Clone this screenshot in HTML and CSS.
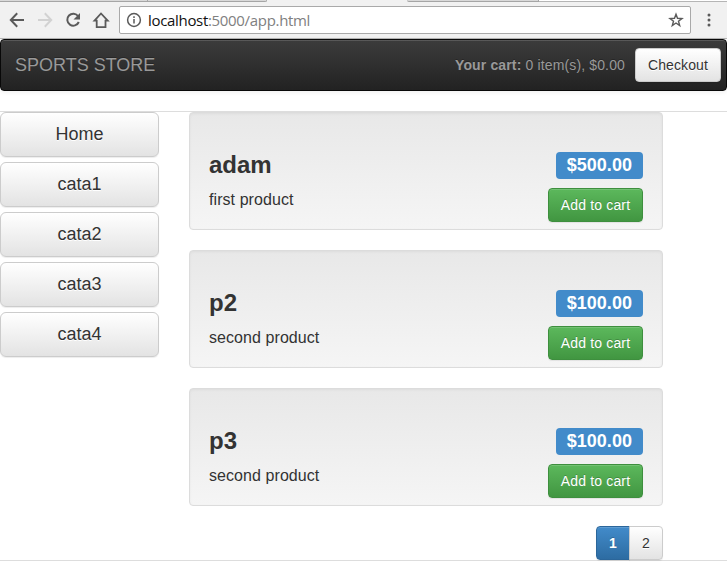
FILE: index.html
```html
<!DOCTYPE html>
<html lang="en">
<head>
<meta charset="utf-8">
<title>SportsStore</title>
<link rel="stylesheet" href="styles.css">
</head>
<body>
<header class="browser">
  <div class="tabs"><span class="tab tab-first"></span><span class="tab tab-second"></span><span class="tab-active"></span><span class="tab tab-third"></span><span class="tab-rest"></span></div>
  <div class="toolbar">
    <svg class="nav-icons" width="119" height="36" viewBox="0 2 119 36" fill="none" stroke="#5a5a5a" stroke-width="2">
      <path d="M24 20H11M17.2 13.3L10.8 20l6.4 6.7"/>
      <path stroke="#d2d2d2" d="M38 20h13M44.8 13.3l6.4 6.7-6.4 6.7"/>
      <path d="M78.2 16.2A6 6 0 1 0 78.8 22"/>
      <path fill="#5a5a5a" stroke="none" d="M80 13v6.5h-6.5z"/>
      <path stroke-width="1.8" stroke-linejoin="miter" d="M96.7 20.6h-2.2L101 13.5l6.7 7.1h-2.2v6.5h-8.8z"/>
    </svg>
    <div class="address">
      <svg width="16" height="16" viewBox="0 0 16 16" fill="none" stroke="#5a5a5a" stroke-width="1.5"><circle cx="8" cy="8" r="6.4"/><path d="M8 7v4.5M8 4.3v1.6"/></svg>
      <span class="url"><b>localhost</b>:5000/app.html</span>
      <svg class="star" width="16" height="16" viewBox="0 0 16 16" fill="none" stroke="#5a5a5a" stroke-width="1.4"><path d="M8 2.2l1.5 4.1 4.5.2-3.5 2.7 1.2 4.3L8 11l-3.7 2.5 1.2-4.3L2 6.5l4.5-.2z"/></svg>
    </div>
    <svg class="menu" width="4" height="14" viewBox="0 0 4 14" fill="#5a5a5a"><circle cx="2" cy="2" r="1.5"/><circle cx="2" cy="7" r="1.5"/><circle cx="2" cy="12" r="1.5"/></svg>
  </div>
</header>
<nav class="navbar">
  <span class="brand">SPORTS STORE</span>
  <span class="cart"><b>Your cart:</b> 0 item(s), $0.00</span>
  <button class="btn btn-default btn-checkout">Checkout</button>
</nav>
<main class="panel">
  <aside class="categories">
    <button class="btn btn-default btn-lg btn-home">Home</button>
    <button class="btn btn-default btn-lg">cata1</button>
    <button class="btn btn-default btn-lg">cata2</button>
    <button class="btn btn-default btn-lg">cata3</button>
    <button class="btn btn-default btn-lg">cata4</button>
  </aside>
  <section class="products">
    <article class="well">
      <div><h3>adam</h3><p>first product</p></div>
      <div class="buy"><span class="price">$500.00</span><button class="btn btn-success">Add to cart</button></div>
    </article>
    <article class="well">
      <div><h3>p2</h3><p>second product</p></div>
      <div class="buy"><span class="price">$100.00</span><button class="btn btn-success">Add to cart</button></div>
    </article>
    <article class="well">
      <div><h3>p3</h3><p>second product</p></div>
      <div class="buy"><span class="price">$100.00</span><button class="btn btn-success">Add to cart</button></div>
    </article>
    <div class="pager"><button class="btn btn-primary">1</button><button class="btn btn-default">2</button></div>
  </section>
</main>
</body>
</html>
```
FILE: styles.css
```css
* { box-sizing: border-box; }
body { margin: 0; height: 583px; overflow: hidden; background: #fff; color: #333; font: 14px/20px "Liberation Sans", Arial, sans-serif; }
.browser { height: 39px; background: #f1f1f1; border-bottom: 1px solid #b5b5b5; }
.tabs { display: flex; height: 2px; }
.tab { background: #d9d9d9; border-bottom: 1px solid #a5a5a5; border-right: 1px solid #a5a5a5; }
.tab-first { width: 148px; }
.tab-second { width: 119px; border-bottom-right-radius: 2px; }
.tab-active { width: 140px; }
.tab-third { width: 132px; border-bottom-left-radius: 2px; }
.tab-rest { flex: 1; background: #fff; border-bottom: 1px solid #b5b5b5; }
.toolbar { display: flex; height: 36px; align-items: center; }
.nav-icons { flex: none; }
.address { display: flex; align-items: center; width: 572px; height: 28px; padding: 0 6px; background: #fff; border: 1px solid #a9a9a9; border-radius: 2px; }
.url { margin-left: 6px; font: 15px/20px "Open Sans", "Noto Sans", sans-serif; letter-spacing: -0.32px; color: #808080; }
.url b { color: #111; font-weight: 400; }
.star { margin-left: auto; }
.menu { margin-left: 16px; }

.navbar { display: flex; align-items: center; height: 52px; padding: 0 5px 0 14px; margin-bottom: 20px; border: 1px solid #080808; border-radius: 4px; background: linear-gradient(#3c3c3c, #222); box-shadow: inset 0 1px 0 rgba(255,255,255,.15), 0 1px 5px rgba(0,0,0,.075); color: #999; text-shadow: 0 -1px 0 rgba(0,0,0,.25); }
.brand { font-size: 18px; }
.cart { margin-left: auto; margin-right: 10px; letter-spacing: .14px; }

.btn { display: block; height: 34px; margin: 0; padding: 6px 12px; border: 1px solid #ccc; border-radius: 4px; font: 14px/20px "Liberation Sans", Arial, sans-serif; color: #333; white-space: nowrap; box-shadow: inset 0 1px 0 rgba(255,255,255,.15), 0 1px 1px rgba(0,0,0,.075); }
.btn-default { background: linear-gradient(#fff, #e3e3e3); text-shadow: 0 1px 0 #fff; }
.btn-checkout { width: 86px; padding: 6px 0; letter-spacing: .1px; }
.btn-lg { width: 159px; height: 45px; border-radius: 6px; font-size: 18px; line-height: 24px; padding: 8px 16px 10px; }
.btn-success { width: 95px; padding: 6px 0; background: linear-gradient(#5cb85c, #419641); border-color: #3e8f3e; color: #fff; text-shadow: 0 -1px 0 rgba(0,0,0,.2); letter-spacing: .15px; }
.btn-primary { background: linear-gradient(#428bca, #2d6ca2); border-color: #2b669a; color: #fff; font-weight: 700; text-shadow: 0 -1px 0 rgba(0,0,0,.2); }
.btn-home { padding: 8px 16px 10px; }

.panel { display: flex; gap: 30px; height: 450px; border-top: 1px solid #ddd; border-bottom: 1px solid #ddd; }
.categories { display: flex; flex-direction: column; gap: 5px; width: 159px; }
.products { width: 474px; }
.well { display: flex; justify-content: space-between; height: 118px; margin-bottom: 20px; padding: 39px 19px 0; border: 1px solid #dcdcdc; border-radius: 4px; background: linear-gradient(#e8e8e8, #f5f5f5); box-shadow: inset 0 1px 3px rgba(0,0,0,.05), 0 1px 0 rgba(255,255,255,.1); }
.well h3 { margin: 0; font-size: 24px; line-height: 26px; }
.well p { margin: 10px 0 0; font-size: 16px; line-height: 23px; letter-spacing: .07px; }
.buy { display: flex; flex-direction: column; align-items: flex-end; gap: 9px; }
.price { width: 87px; height: 27px; padding-right: 11px; border-radius: 4px; background: #428bca; color: #fff; font-size: 18px; font-weight: 700; line-height: 26px; text-align: right; letter-spacing: .04px; }
.pager { display: flex; justify-content: flex-end; }
.pager .btn { width: 34px; padding: 6px 0; text-align: center; }
.pager .btn-primary { border-radius: 4px 0 0 4px; }
.pager .btn-default { margin-left: -1px; border-radius: 0 4px 4px 0; }
```
